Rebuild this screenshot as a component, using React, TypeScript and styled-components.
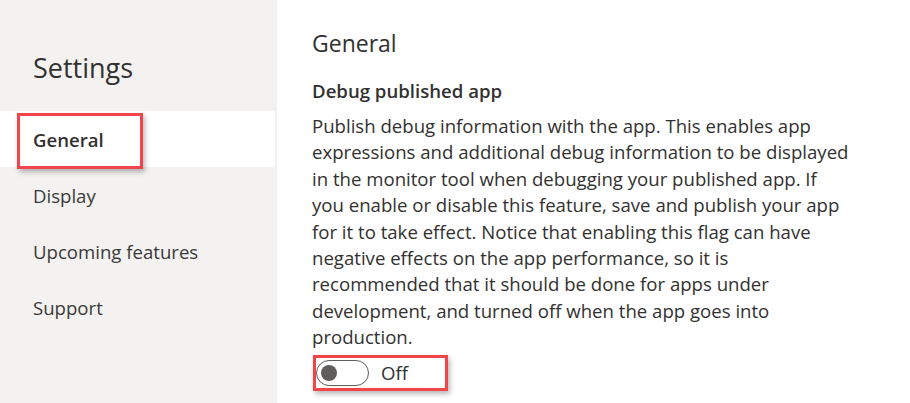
import React from "react";
import styled, { createGlobalStyle } from "styled-components";

const GlobalStyle = createGlobalStyle`
  html, body { margin: 0; padding: 0; background: #ffffff; }
  body { font-family: "Open Sans", "Noto Sans", sans-serif; color: #323130; }
  * { box-sizing: border-box; }
`;

const Page = styled.div`
  display: flex;
  width: 910px;
  height: 403px;
  overflow: hidden;
  background: #ffffff;
`;

const Sidebar = styled.nav`
  width: 277px;
  flex: none;
  background: #f3f2f1;
  padding-top: 46px;
  display: flex;
  flex-direction: column;
`;

const SidebarTitle = styled.h1`
  margin: 0 0 21px 33px;
  font-size: 27px;
  line-height: 44px;
  font-weight: 400;
  color: #323130;
`;

const NavList = styled.ul`
  list-style: none;
  margin: 0;
  padding: 0;
  padding-right: 2px;
  display: flex;
  flex-direction: column;
`;

const NavItem = styled.li<{ $active?: boolean }>`
  position: relative;
  height: 56px;
  display: flex;
  align-items: center;
  padding-left: 33px;
  font-size: 18.6px;
  font-weight: ${(p) => (p.$active ? 600 : 400)};
  color: ${(p) => (p.$active ? "#323130" : "#3b3a39")};
  background: ${(p) => (p.$active ? "#ffffff" : "transparent")};
  border-radius: 0 3px 3px 0;
`;

const Highlight = styled.span<{ $w: number; $h: number; $l: number; $t: number }>`
  position: absolute;
  left: ${(p) => p.$l}px;
  top: ${(p) => p.$t}px;
  width: ${(p) => p.$w}px;
  height: ${(p) => p.$h}px;
  border: 3px solid #f2454b;
  box-shadow: 2px 3px 5px rgba(0, 0, 0, 0.28);
  pointer-events: none;
`;

const Main = styled.main`
  flex: 1;
  padding: 25px 0 0 35px;
  display: flex;
  flex-direction: column;
`;

const Heading = styled.h2`
  margin: 0;
  font-size: 23px;
  line-height: 36px;
  font-weight: 400;
  color: #323130;
`;

const SettingTitle = styled.h3`
  margin: 16px 0 8px;
  font-size: 18.6px;
  line-height: 28px;
  font-weight: 600;
  color: #323130;
`;

const Description = styled.p`
  margin: 0;
  font-size: 18.6px;
  line-height: 26.4px;
  color: #323130;
`;

const Line = styled.span`
  display: block;
  white-space: nowrap;
`;

const ToggleRow = styled.div`
  position: relative;
  margin-top: 8px;
  margin-left: 4px;
  display: flex;
  align-items: center;
  width: 130px;
  height: 28px;
`;

const Track = styled.span`
  width: 53px;
  height: 26px;
  border: 1px solid #605e5c;
  border-radius: 13px;
  display: flex;
  align-items: center;
  padding-left: 4px;
  background: #ffffff;
`;

const Thumb = styled.span`
  width: 16px;
  height: 16px;
  border-radius: 50%;
  background: #605e5c;
`;

const ToggleLabel = styled.span`
  margin-left: 12px;
  font-size: 18.6px;
  color: #323130;
`;

const lines = [
  "Publish debug information with the app. This enables app",
  "expressions and additional debug information to be displayed",
  "in the monitor tool when debugging your published app. If",
  "you enable or disable this feature, save and publish your app",
  "for it to take effect. Notice that enabling this flag can have",
  "negative effects on the app performance, so it is",
  "recommended that it should be done for apps under",
  "development, and turned off when the app goes into",
  "production.",
];

export default function App() {
  return (
    <>
      <GlobalStyle />
      <Page>
        <Sidebar>
          <SidebarTitle>Settings</SidebarTitle>
          <NavList>
            <NavItem $active>
              General
              <Highlight $l={17} $t={2} $w={126} $h={56} />
            </NavItem>
            <NavItem>Display</NavItem>
            <NavItem>Upcoming features</NavItem>
            <NavItem>Support</NavItem>
          </NavList>
        </Sidebar>
        <Main>
          <Heading>General</Heading>
          <SettingTitle>Debug published app</SettingTitle>
          <Description>
            {lines.map((l) => (
              <Line key={l}>{l}</Line>
            ))}
          </Description>
          <ToggleRow>
            <Track>
              <Thumb />
            </Track>
            <ToggleLabel>Off</ToggleLabel>
            <Highlight $l={-3} $t={-4} $w={135} $h={36} />
          </ToggleRow>
        </Main>
      </Page>
    </>
  );
}
